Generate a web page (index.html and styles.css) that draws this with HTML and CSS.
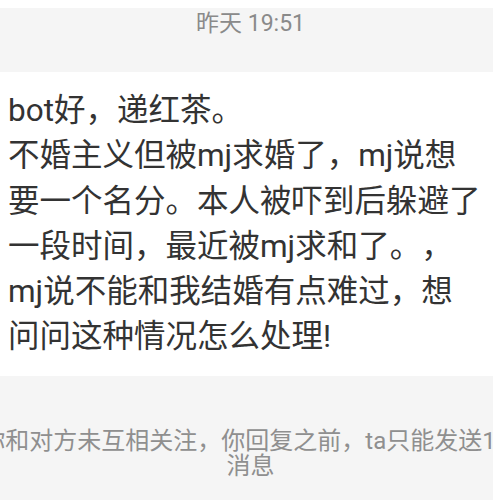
FILE: index.html
```html
<!DOCTYPE html>
<html lang="zh-CN">
<head>
<meta charset="utf-8">
<title>私信</title>
<link rel="stylesheet" href="styles.css">
</head>
<body>
<div class="chat">
  <div class="time-bar">
    <span class="time">昨天 19:51</span>
  </div>
  <div class="message">
    <p class="message-text">bot好，递红茶。<br>不婚主义但被mj求婚了，mj说想要一个名分。本人被吓到后躲避了一段时间，最近被mj求和了。，mj说不能和我结婚有点难过，想问问这种情况怎么处理!</p>
  </div>
  <div class="notice">
    <p class="notice-text">你和对方未互相关注，你回复之前，ta只能发送1条消息</p>
  </div>
</div>
</body>
</html>
```

FILE: styles.css
```css
html, body {
  margin: 0;
  padding: 0;
  background: #ffffff;
  overflow: hidden;
}

body {
  font-family: Roboto, "Noto Sans CJK SC", sans-serif;
  text-spacing-trim: space-all;
}

.chat {
  width: 493px;
  padding-top: 8px;
  display: flex;
  flex-direction: column;
}

.time-bar {
  height: 64px;
  box-sizing: border-box;
  padding: 2px 0 0 8px;
  background: #f5f5f5;
  text-align: center;
}

.time {
  font-size: 23px;
  line-height: 28px;
  color: #8a8a8a;
}

.message {
  height: 304px;
  box-sizing: border-box;
  padding: 16px 0 0 8px;
  background: #ffffff;
}

.message-text {
  margin: 0;
  width: 476px;
  font-size: 31.5px;
  line-height: 45.3px;
  color: #333333;
}

.notice {
  height: 130px;
  box-sizing: border-box;
  padding: 53px 0 0 8px;
  background: #f5f5f5;
  display: flex;
  justify-content: center;
}

.notice-text {
  flex: none;
  margin: 0;
  width: 545px;
  font-size: 24px;
  line-height: 25px;
  color: #8f8f8f;
  text-align: center;
}
```
